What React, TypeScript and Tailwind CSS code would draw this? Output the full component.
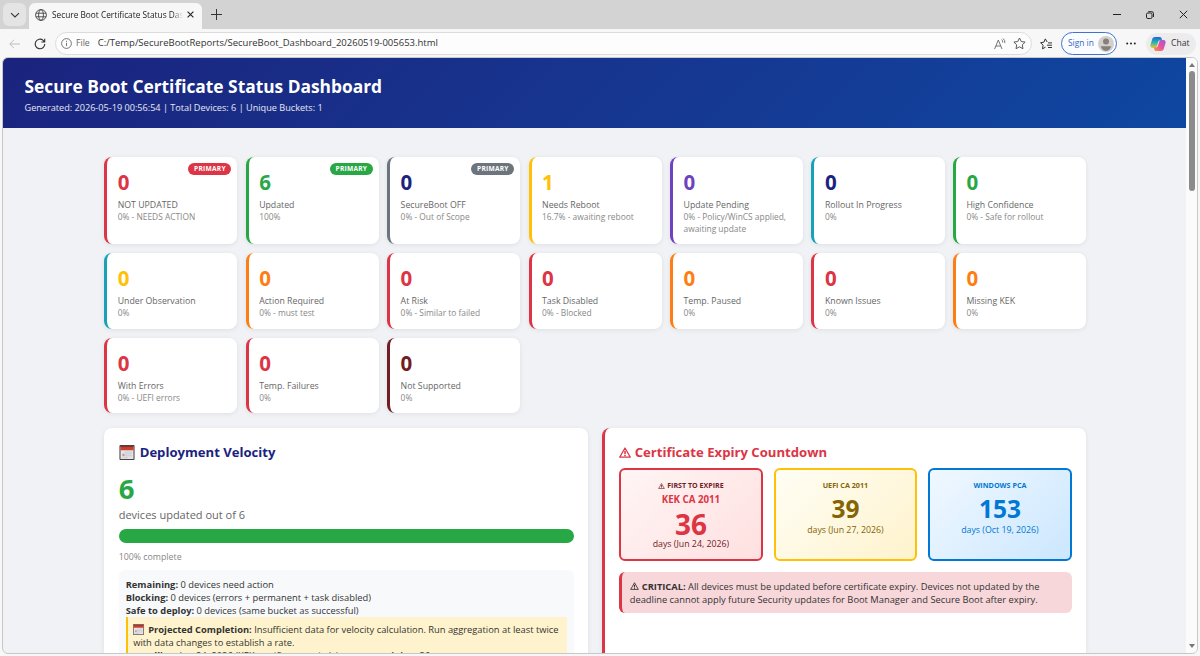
import clsx from "clsx";

const stats = [
  { value: "0", label: "NOT UPDATED", note: "0% - NEEDS ACTION", border: "border-[#dc3545]", color: "text-[#dc3545]", badge: "bg-[#dc3545]" },
  { value: "6", label: "Updated", note: "100%", border: "border-[#28a745]", color: "text-[#28a745]", badge: "bg-[#28a745]" },
  { value: "0", label: "SecureBoot OFF", note: "0% - Out of Scope", border: "border-[#6c757d]", color: "text-[#1a237e]", badge: "bg-[#6c757d]" },
  { value: "1", label: "Needs Reboot", note: "16.7% - awaiting reboot", border: "border-[#ffc107]", color: "text-[#ffc107]" },
  { value: "0", label: "Update Pending", note: "0% - Policy/WinCS applied, awaiting update", border: "border-[#6f42c1]", color: "text-[#6f42c1]" },
  { value: "0", label: "Rollout In Progress", note: "0%", border: "border-[#17a2b8]", color: "text-[#1a237e]" },
  { value: "0", label: "High Confidence", note: "0% - Safe for rollout", border: "border-[#28a745]", color: "text-[#28a745]" },
  { value: "0", label: "Under Observation", note: "0%", border: "border-[#17a2b8]", color: "text-[#ffc107]" },
  { value: "0", label: "Action Required", note: "0% - must test", border: "border-[#fd7e14]", color: "text-[#fd7e14]" },
  { value: "0", label: "At Risk", note: "0% - Similar to failed", border: "border-[#dc3545]", color: "text-[#dc3545]" },
  { value: "0", label: "Task Disabled", note: "0% - Blocked", border: "border-[#dc3545]", color: "text-[#dc3545]" },
  { value: "0", label: "Temp. Paused", note: "0%", border: "border-[#fd7e14]", color: "text-[#fd7e14]" },
  { value: "0", label: "Known Issues", note: "0%", border: "border-[#dc3545]", color: "text-[#dc3545]" },
  { value: "0", label: "Missing KEK", note: "0%", border: "border-[#fd7e14]", color: "text-[#fd7e14]" },
  { value: "0", label: "With Errors", note: "0% - UEFI errors", border: "border-[#dc3545]", color: "text-[#dc3545]" },
  { value: "0", label: "Temp. Failures", note: "0%", border: "border-[#dc3545]", color: "text-[#dc3545]" },
  { value: "0", label: "Not Supported", note: "0%", border: "border-[#721c24]", color: "text-[#721c24]" },
];

const WarningIcon = ({ className }: { className?: string }) => (
  <svg viewBox="0 0 24 22" className={clsx("inline-block shrink-0", className)} fill="none" stroke="currentColor" strokeLinejoin="round">
    <path d="M12 2 22.5 20.3H1.5Z" strokeWidth="2.4" />
    <path d="M12 7.5v6.8M12 16v2.6" strokeWidth="3" />
  </svg>
);

const CalendarIcon = ({ className }: { className?: string }) => (
  <svg viewBox="0 0 16 16" className={clsx("inline-block shrink-0", className)}>
    <path d="M.5.5h15v15H.5z" fill="#e6e4e8" stroke="#38302f" />
    <path d="M1 1h14v4.600H1z" fill="#cf3f2d" />
    <path d="M1 1h14v1.300H1z" fill="#7d3430" />
    <path d="M5.500 7.500h8M3 9.500h10.500M3 11.500h10.500M3 13.500h6" stroke="#bfc2d0" strokeWidth=".8" />
    <path d="M3.200 9.600h2v2h-2z" fill="#d58a7d" />
  </svg>
);

const TabBar = () => (
  <div className="flex h-[29px] items-end bg-[#d3d3d3]">
    <div className="mb-[3px] ml-[3px] flex h-[23px] w-[23px] items-center justify-center rounded-[6px] bg-[#e4e4e4]">
      <svg className="h-[10px] w-[10px]" viewBox="0 0 10 10" fill="none" stroke="#333" strokeWidth="1.1">
        <path d="M1 3.2 5 7l4-3.8" />
      </svg>
    </div>
    <div className="ml-[3px] flex h-[26px] w-[173px] items-center rounded-t-[6px] bg-[#f7f7f7] pb-[3px] pl-[6px]">
      <svg className="h-[12px] w-[12px] shrink-0" viewBox="0 0 12 12" fill="none" stroke="#444" strokeWidth=".9">
        <circle cx="6" cy="6" r="5.4" />
        <ellipse cx="6" cy="6" rx="2.4" ry="5.4" />
        <path d="M1 4.2h10M1 7.8h10" />
      </svg>
      <span className="ml-[5px] w-[131px] overflow-hidden text-[8.3px] leading-[14px] whitespace-nowrap text-[#222] [mask-image:linear-gradient(to_right,black_92%,transparent)]">
        Secure Boot Certificate Status Dashboard
      </span>
      <svg className="ml-[4px] h-[7px] w-[7px] shrink-0" viewBox="0 0 7 7" stroke="#222" strokeWidth="1.1">
        <path d="m.6.6 5.8 5.8M6.4.6.6 6.4" />
      </svg>
    </div>
    <svg className="mb-[9px] ml-[9px] h-[11px] w-[11px]" viewBox="0 0 11 11" stroke="#333" strokeWidth="1">
      <path d="M5.5 0v11M0 5.5h11" />
    </svg>
    <div className="mr-[12px] mb-[10px] ml-auto flex items-center gap-[25px]">
      <svg className="h-[9px] w-[8px]" viewBox="0 0 8 9" stroke="#222" strokeWidth="1">
        <path d="M0 4.5h8" />
      </svg>
      <svg className="h-[8px] w-[8px]" viewBox="0 0 8 8" fill="none" stroke="#222" strokeWidth="1">
        <rect x=".5" y="2" width="5.5" height="5.5" rx="1.3" />
        <path d="M2.2.7h3.6a1.7 1.7 0 0 1 1.7 1.7V6" />
      </svg>
      <svg className="h-[9px] w-[9px]" viewBox="0 0 9 9" stroke="#222" strokeWidth="1">
        <path d="m.8.8 7.4 7.4M8.2.8.8 8.2" />
      </svg>
    </div>
  </div>
);

const STAR = "m6 .9 1.6 3.3 3.6.5-2.6 2.5.6 3.6L6 9.1l-3.2 1.7.6-3.6L.8 4.7l3.6-.5Z";

const Toolbar = () => (
  <div className="flex h-[28px] items-center bg-[#f7f7f7] pt-px">
    <svg className="ml-[9px] h-[10px] w-[11px]" viewBox="0 0 11 10" fill="none" stroke="#bdbdbd" strokeWidth="1">
      <path d="M11 5H.8M5 .8.8 5 5 9.2" />
    </svg>
    <svg className="ml-[14px] h-[12px] w-[12px]" viewBox="0 0 12 12" fill="none" stroke="#333" strokeWidth="1.1">
      <path d="M10.8 6A4.8 4.8 0 1 1 9.2 2.4L10.6 4M10.7.7V4H7.4" />
    </svg>
    <div className="ml-[9px] flex h-[23px] w-[977px] items-center rounded-full border border-[#dcdcdc] bg-[#fdfdfd] pl-[5px]">
      <svg className="h-[11px] w-[11px]" viewBox="0 0 11 11" fill="none" stroke="#666" strokeWidth=".9">
        <circle cx="5.5" cy="5.5" r="4.9" />
        <path d="M5.5 4.8V8M5.5 2.8v1.1" />
      </svg>
      <span className="ml-[4px] text-[8.7px] text-[#666]">File</span>
      <span className="ml-[8px] text-[9.5px] text-[#333]">C:/Temp/SecureBootReports/SecureBoot_Dashboard_20260519-005653.html</span>
      <svg className="ml-auto h-[12px] w-[12px]" viewBox="0 0 12 12" fill="none" stroke="#666" strokeWidth=".9">
        <path d="M.6 11 4.3 2 8 11M1.9 8h4.8M7.5 1.5q1.5 1 1.2 3M9 .5q2.4 1.6 1.8 4.500" />
      </svg>
      <svg className="mr-[5px] ml-[7px] h-[13px] w-[13px]" viewBox="0 0 12 12" fill="none" stroke="#555" strokeWidth=".9" strokeLinejoin="round">
        <path d={STAR} />
      </svg>
    </div>
    <svg className="ml-[8px] h-[12px] w-[12px]" viewBox="0 0 12 12" fill="none" stroke="#333" strokeWidth="1" strokeLinejoin="round">
      <path d="M7.2 4 5.3.9 3.9 4.2.6 4.7l2.5 2.5-.6 3.6 3-1.6M8 4.9h4M7 7.2h5M8 9.5h4" />
    </svg>
    <div className="ml-[9px] flex h-[23px] w-[56px] items-center justify-between rounded-full border border-[#3f73d1] bg-[#fafcff] pr-[2px] pl-[6px]">
      <span className="text-[8.4px] text-[#3267c8]">Sign in</span>
      <svg className="h-[16px] w-[16px]" viewBox="0 0 16 16">
        <circle cx="8" cy="8" r="8" fill="#d2cfcc" />
        <circle cx="8" cy="5.6" r="3" fill="#85807c" />
        <path d="M2.8 10.2h10.4A6.3 6.3 0 0 1 8 15a6.3 6.3 0 0 1-5.2-4.8Z" fill="#85807c" />
      </svg>
    </div>
    <svg className="ml-[9px] h-[3px] w-[10px]" viewBox="0 0 10 3" fill="#222">
      <circle cx="1.2" cy="1.5" r="1" />
      <circle cx="5" cy="1.5" r="1" />
      <circle cx="8.8" cy="1.5" r="1" />
    </svg>
    <div className="ml-[10px] flex h-[22px] w-[50px] items-center rounded-full bg-[#ececec] pl-[4px]">
      <svg className="h-[16px] w-[16px]" viewBox="0 0 16 16">
        <defs>
          <linearGradient id="copilotLeft" x1="0" y1="0" x2="0" y2="1">
            <stop offset="0" stopColor="#1b65dd" />
            <stop offset=".5" stopColor="#27b6ae" />
            <stop offset="1" stopColor="#f5c82f" />
          </linearGradient>
          <linearGradient id="copilotRight" x1="1" y1="0" x2="0" y2="1">
            <stop offset="0" stopColor="#9a58e8" />
            <stop offset=".5" stopColor="#e9539c" />
            <stop offset="1" stopColor="#f9933f" />
          </linearGradient>
        </defs>
        <path d="M5.2 1h4.6c1.2 0 1.6.8 1.9 1.8l.5 1.7H10c-1 0-1.5.5-1.8 1.4L6.7 10.5c-.3 1-.9 1.5-1.800 1.500H2.600C.800 12 0 10.500.5 8.800L2.200 3.200C2.600 1.800 3.600 1 5.200 1Z" fill="url(#copilotLeft)" />
        <path d="M10.800 15H6.200c-1.200 0-1.600-.8-1.900-1.800L3.800 11.500H6c1 0 1.500-.5 1.800-1.400l1.500-4.600c.3-1 .9-1.500 1.800-1.500h2.300c1.800 0 2.600 1.500 2.100 3.200l-1.700 5.600c-.4 1.400-1.400 2.200-3 2.200Z" fill="url(#copilotRight)" />
      </svg>
      <span className="ml-[5px] text-[8.6px] text-[#333]">Chat</span>
    </div>
  </div>
);

type Stat = (typeof stats)[number];

const StatCard = ({ stat }: { stat: Stat }) => (
  <div className={clsx("relative rounded-[8px] border-l-[3px] bg-white pt-[11px] pr-[10px] pb-[9.5px] pl-[10.5px] shadow-[0_1px_5px_rgba(0,0,0,0.08)]", stat.border)}>
    {stat.badge && (
      <span className={clsx("absolute top-[6px] right-[6px] flex h-[12px] w-[43px] items-center justify-center rounded-full text-[6.6px] font-bold tracking-[0.25px] text-white", stat.badge)}>
        PRIMARY
      </span>
    )}
    <div className={clsx("text-[20.5px] leading-[29px] font-bold", stat.color)}>{stat.value}</div>
    <div className="mt-[2px] text-[8.75px] leading-[12px] text-[#666]">{stat.label}</div>
    <div className="text-[8.4px] leading-[12px] text-[#888]">{stat.note}</div>
  </div>
);

const VelocityPanel = () => (
  <section className="rounded-[8px] bg-white px-[14.5px] pt-[14px] shadow-[0_1px_5px_rgba(0,0,0,0.08)]">
    <h2 className="flex h-[21px] items-center text-[13.1px] font-bold text-[#1a237e]">
      <CalendarIcon className="mr-[5px] h-[15px] w-[16px]" />
      Deployment Velocity
    </h2>
    <div className="mt-[8px] text-[27.5px] leading-[36px] font-bold text-[#28a745]">6</div>
    <div className="text-[11px] leading-[16px] text-[#666]">devices updated out of 6</div>
    <div className="mt-[6px] h-[14px] rounded-full bg-[#28a745]" />
    <div className="mt-[8px] text-[8.8px] leading-[13px] text-[#888]">100% complete</div>
    <div className="mt-[6px] h-[120px] rounded-[6px] bg-[#f8f9fa] px-[7px] pt-[8px] text-[9.34px] leading-[13px] text-[#333]">
      <div><b>Remaining:</b> 0 devices need action</div>
      <div><b>Blocking:</b> 0 devices (errors + permanent + task disabled)</div>
      <div><b>Safe to deploy:</b> 0 devices (same bucket as successful)</div>
      <div className="h-[60px] border-l-2 border-[#ffc107] bg-[#fff3cd] pt-[6px] pl-[5.5px] whitespace-nowrap">
        <div>
          <CalendarIcon className="mr-[4px] h-[11px] w-[11px] align-[-2px]" />
          <b>Projected Completion:</b> Insufficient data for velocity calculation. Run aggregation at least twice
        </div>
        <div>with data changes to establish a rate.</div>
        <div><b>Deadline:</b> Jun 24, 2026 (KEK certificate expiry) | <b>Days remaining:</b> 36</div>
      </div>
    </div>
  </section>
);

const ExpiryPanel = () => (
  <section className="rounded-[8px] border-l-[3px] border-[#dc3545] bg-white pt-[14px] pr-[14.5px] pl-[14px] shadow-[0_1px_5px_rgba(0,0,0,0.08)]">
    <h2 className="flex h-[21px] items-center text-[13.15px] font-bold text-[#dc3545]">
      <WarningIcon className="mr-[3.5px] h-[11px] w-[12px]" />
      Certificate Expiry Countdown
    </h2>
    <div className="mt-[5px] grid h-[93px] grid-cols-3 gap-[11px] text-center">
      <div className="rounded-[6px] border-2 border-[#dc3545] bg-linear-135 from-[#fff5f5] to-[#ffe0e0] pt-[10px] text-[#721c24]">
        <div className="flex items-center justify-center text-[7.1px] leading-[11px] font-bold">
          <WarningIcon className="mr-[2px] h-[6px] w-[7px]" />
          FIRST TO EXPIRE
        </div>
        <div className="mt-[2px] text-[9.7px] leading-[13px] font-bold text-[#dc3545]">KEK CA 2011</div>
        <div className="mt-[4px] text-[28px] leading-[28px] font-bold text-[#dc3545]">36</div>
        <div className="text-[8.8px] leading-[13px]">days (Jun 24, 2026)</div>
      </div>
      <div className="rounded-[6px] border-2 border-[#ffc107] bg-linear-135 from-[#fffef5] to-[#fff3cd] pt-[10px] text-[#856404]">
        <div className="text-[7.2px] leading-[11px] font-bold">UEFI CA 2011</div>
        <div className="mt-[3px] text-[24.5px] leading-[30px] font-bold">39</div>
        <div className="text-[8.8px] leading-[13px]">days (Jun 27, 2026)</div>
      </div>
      <div className="rounded-[6px] border-2 border-[#0078d4] bg-linear-135 from-[#f0f8ff] to-[#cce7ff] pt-[10px] text-[#0078d4]">
        <div className="text-[7.2px] leading-[11px] font-bold">WINDOWS PCA</div>
        <div className="mt-[3px] text-[24.5px] leading-[30px] font-bold">153</div>
        <div className="text-[8.8px] leading-[13px]">days (Oct 19, 2026)</div>
      </div>
    </div>
    <div className="mt-[11px] rounded-[6px] border-l-[3px] border-[#dc3545] bg-[#f8d7da] py-[7.5px] pl-[7.5px] text-[9.34px] leading-[13px] whitespace-nowrap text-[#333]">
      <div>
        <WarningIcon className="mr-[3px] h-[8px] w-[9px] align-[-0.5px]" />
        <b>CRITICAL:</b> All devices must be updated before certificate expiry. Devices not updated by the
      </div>
      <div>deadline cannot apply future Security updates for Boot Manager and Secure Boot after expiry.</div>
    </div>
  </section>
);

const Scrollbar = () => (
  <div className="flex w-[11px] shrink-0 flex-col items-center bg-[#fbfbfb] pt-[5px] pb-[5px]">
    <svg className="h-[4px] w-[6px]" viewBox="0 0 6 4" fill="#777"><path d="M3 0 6 4H0Z" /></svg>
    <div className="mt-[4px] h-[120px] w-[6px] rounded-full bg-[#8b8b8b]" />
    <svg className="mt-auto h-[4px] w-[6px]" viewBox="0 0 6 4" fill="#777"><path d="M3 4 6 0H0Z" /></svg>
  </div>
);

export default function App() {
  return (
    <div className="h-[656px] w-[1200px] overflow-hidden bg-[#f7f7f7] font-['Open_Sans','Noto_Sans',sans-serif]">
      <TabBar />
      <Toolbar />
      <div className="mr-[2px] ml-[2px] flex h-[597px] overflow-hidden rounded-[6px] border border-[#c8c8c8] bg-[#f0f2f5]">
        <main className="min-w-0 flex-1 overflow-hidden">
          <header className="h-[70px] bg-linear-135 from-[#1a237e] to-[#0d47a1] pt-[16px] pl-[21.500px] text-white">
            <h1 className="text-[17.35px] leading-[25px] font-bold">Secure Boot Certificate Status Dashboard</h1>
            <p className="mt-[2px] text-[9.14px] leading-[13px] text-white/90">
              Generated: 2026-05-19 00:56:54 | Total Devices: 6 | Unique Buckets: 1
            </p>
          </header>
          <div className="ml-[101.2px] w-[982px] pt-[28.5px]">
            <div className="grid grid-cols-7 gap-x-[8.2px] gap-y-[9px]">
              {stats.map((stat) => (
                <StatCard key={stat.label} stat={stat} />
              ))}
            </div>
            <div className="mt-[15px] grid h-[300px] grid-cols-2 gap-[14px]">
              <VelocityPanel />
              <ExpiryPanel />
            </div>
          </div>
        </main>
        <Scrollbar />
      </div>
    </div>
  );
}
